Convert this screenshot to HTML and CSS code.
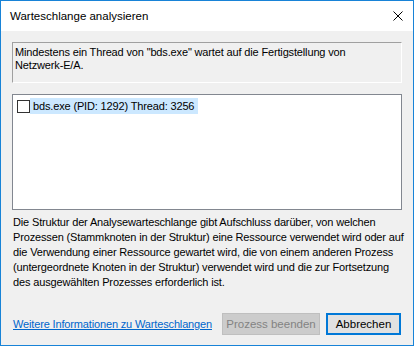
FILE: index.html
```html
<!DOCTYPE html>
<html lang="de">
<head>
  <meta charset="UTF-8">
  <title>Warteschlange analysieren</title>
  <link rel="stylesheet" href="styles.css">
</head>
<body>
  <div class="dialog">
    <div class="titlebar">
      <span class="title">Warteschlange analysieren</span>
      <svg class="close" width="10" height="10" viewBox="0 0 10 10">
        <path d="M0.5 0.5 L9.5 9.5 M9.5 0.5 L0.5 9.5" stroke="#000" stroke-width="1" fill="none"/>
      </svg>
    </div>
    <div class="dialog-body">
      <div class="message">Mindestens ein Thread von "bds.exe" wartet auf die Fertigstellung von<br>Netzwerk-E/A.</div>

      <div class="tree">
        <div class="tree-item">
          <span class="checkbox"></span>
          <span class="item-label">bds.exe (PID: 1292) Thread: 3256</span>
        </div>
      </div>

      <p class="description">
        Die Struktur der Analysewarteschlange gibt Aufschluss darüber, von welchen<br>
        Prozessen (Stammknoten in der Struktur) eine Ressource verwendet wird oder auf<br>
        die Verwendung einer Ressource gewartet wird, die von einem anderen Prozess<br>
        (untergeordnete Knoten in der Struktur) verwendet wird und die zur Fortsetzung<br>
        des ausgewählten Prozesses erforderlich ist.
      </p>

      <div class="footer">
        <a class="more-link" href="#">Weitere Informationen zu Warteschlangen</a>
        <div class="buttons">
          <button class="btn btn-disabled" disabled>Prozess beenden</button>
          <button class="btn btn-default">Abbrechen</button>
        </div>
      </div>
    </div>
  </div>
</body>
</html>
```

FILE: styles.css
```css
body {
  margin: 0;
  background: #ffffff;
  font-family: "Liberation Sans", Arial, sans-serif;
  font-size: 11px;
  color: #000;
}
.dialog {
  width: 414px;
  height: 346px;
  box-sizing: border-box;
  border: 1px solid #1883d7;
  background: #f0f0f0;
  display: flex;
  flex-direction: column;
}
.titlebar {
  height: 30px;
  background: #fff;
  display: flex;
  align-items: center;
  justify-content: space-between;
  padding: 0 10px 0 9px;
}
.title {
  font-size: 11.5px;
}
.close {
  display: block;
}
.dialog-body {
  padding: 11px 11px 0 11px;
  flex: 1;
}
.message {
  height: 41px;
  box-sizing: border-box;
  border-top: 1px solid #a0a0a0;
  border-left: 1px solid #a0a0a0;
  border-right: 1px solid #fff;
  border-bottom: 1px solid #fff;
  padding: 3px 1px 0 2px;
  line-height: 13px;
  white-space: nowrap;
  letter-spacing: -0.15px;
}
.tree {
  margin-top: 11px;
  width: 390px;
  height: 116px;
  box-sizing: border-box;
  border: 1px solid #828790;
  background: #fff;
  padding: 3px 4px;
}
.tree-item {
  display: flex;
  align-items: center;
  height: 16px;
}
.checkbox {
  width: 11px;
  height: 11px;
  border: 1px solid #333;
  background: #fff;
}
.item-label {
  background: #cce8ff;
  height: 16px;
  line-height: 16px;
  padding: 0 4px 0 3px;
  letter-spacing: -0.15px;
}
.description {
  margin: 5px 0 0 1px;
  line-height: 15px;
  white-space: nowrap;
  letter-spacing: -0.15px;
}
.footer {
  margin-top: 23px;
  display: flex;
  align-items: center;
  justify-content: space-between;
  padding-right: 1px;
}
.more-link {
  color: #0066cc;
  text-decoration: underline;
  margin-left: 1px;
  white-space: nowrap;
  letter-spacing: -0.15px;
}
.buttons {
  display: flex;
  gap: 6px;
  flex-shrink: 0;
}
.btn {
  font-family: "Liberation Sans", Arial, sans-serif;
  font-size: 11.5px;
  height: 22px;
  padding: 0;
  background: #e1e1e1;
  border: 1px solid #adadad;
}
.btn-disabled {
  width: 98px;
  background: #cccccc;
  border-color: #bfbfbf;
  color: #838383;
}
.btn-default {
  width: 75px;
  border: 2px solid #0078d7;
  color: #000;
}
```
